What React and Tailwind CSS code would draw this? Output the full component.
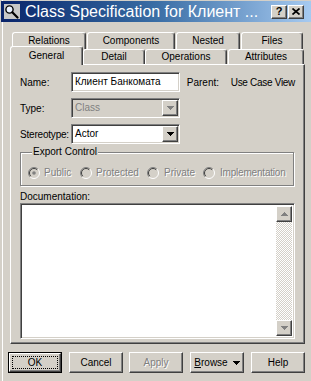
import React from "react";

const raised =
  "border border-t-white border-l-white border-r-[#404040] border-b-[#404040] shadow-[inset_-1px_-1px_0_#808080]";
const sunken =
  "border border-t-[#808080] border-l-[#808080] border-r-white border-b-white shadow-[inset_1px_1px_0_#404040,inset_-1px_-1px_0_#d4d0c8]";
const dis = "text-[#808080] [text-shadow:1px_1px_0_#ffffff]";

function Tri({ up = false, color = "#000" }) {
  const rows = [7, 5, 3, 1];
  const r = up ? [...rows].reverse() : rows;
  return (
    <svg width="7" height="4" viewBox="0 0 7 4" shapeRendering="crispEdges">
      {r.map((w, i) => (
        <rect key={i} x={(7 - w) / 2} y={i} width={w} height="1" fill={color} />
      ))}
    </svg>
  );
}

function Radio({ checked }) {
  return (
    <svg width="12" height="12" viewBox="0 0 12 12" className="shrink-0">
      <circle cx="6" cy="6" r="5" fill="#d4d0c8" />
      <path d="M2.1 9.9A5.5 5.5 0 0 1 9.9 2.1" stroke="#808080" strokeWidth="1" fill="none" />
      <path d="M9.9 2.1A5.5 5.5 0 0 1 2.1 9.9" stroke="#ffffff" strokeWidth="1" fill="none" />
      <path d="M2.8 9.2A4.5 4.5 0 0 1 9.2 2.8" stroke="#404040" strokeWidth="1" fill="none" />
      {checked && <circle cx="6" cy="6" r="1.8" fill="#808080" />}
    </svg>
  );
}

function Tab1({ label, className }) {
  return (
    <div
      className={`h-[17px] border-t border-l border-white border-r border-r-[#404040] rounded-t-[3px] shadow-[inset_-1px_0_0_#808080] flex justify-center pt-[2px] leading-[12px] ${className}`}
    >
      {label}
    </div>
  );
}

function Tab2({ label, className }) {
  return (
    <div
      className={`h-[15px] border-t border-l border-white border-r border-r-[#404040] rounded-t-[3px] shadow-[inset_-1px_0_0_#808080] flex justify-center pt-[1px] leading-[12px] ${className}`}
    >
      {label}
    </div>
  );
}

function Btn({ children, className = "" }) {
  return (
    <div className={`w-[54px] h-[21px] ${raised} flex items-center justify-center leading-[12px] ${className}`}>
      {children}
    </div>
  );
}

export default function App() {
  return (
    <div className="w-[311px] h-[381px] bg-[#d4d0c8] overflow-hidden font-['Liberation_Sans',Arial,sans-serif] text-[10px] text-black whitespace-nowrap shadow-[inset_2px_0_0_#d4d0c8,inset_3px_0_0_#ffffff]">
      {/* title bar */}
      <div className="mt-[1px] ml-[1px] h-[21px] flex items-center bg-linear-to-r from-[#0a246a] via-[#3a6ea5] to-[#a6caf0] pl-[3px] pr-[7px]">
        <svg width="16" height="15" viewBox="0 0 16 15" className="shrink-0">
          <rect x="0" y="0" width="16" height="15" fill="#c8c8c8" />
          <circle cx="5.5" cy="5.5" r="3.6" fill="#e8f0ff" stroke="#000" strokeWidth="1.4" />
          <path d="M8.3 8.3L13.5 13.5" stroke="#000" strokeWidth="2.2" strokeLinecap="round" />
          <path d="M4 4.2L5.4 3.4" stroke="#fff" strokeWidth="1" />
        </svg>
        <div className="ml-[5px] flex-1 text-white text-[16px] leading-[20px] overflow-hidden">
          Class Specification for Клиент ...
        </div>
        <div className={`w-[16px] h-[14px] bg-[#d4d0c8] ${raised} flex items-center justify-center font-bold text-[11px] leading-[11px]`}>
          ?
        </div>
        <div className={`ml-[1px] w-[16px] h-[14px] bg-[#d4d0c8] ${raised} flex items-center justify-center`}>
          <svg width="8" height="7" viewBox="0 0 8 7">
            <path d="M0.5 0.5L7.5 6.5M7.5 0.5L0.5 6.5" stroke="#000" strokeWidth="1.7" />
          </svg>
        </div>
      </div>

      {/* tabs row 1 */}
      <div className="mt-[10px] ml-[12px] flex gap-[1px]">
        <Tab1 label="Relations" className="w-[74px]" />
        <Tab1 label="Components" className="w-[88px]" />
        <Tab1 label="Nested" className="w-[64px]" />
        <Tab1 label="Files" className="w-[62px]" />
      </div>
      {/* tabs row 2 */}
      <div className="ml-[10px] h-[15px] flex items-end">
        <div className="relative z-10 -mb-[1px] w-[73px] h-[19px] bg-[#d4d0c8] border-t border-l border-white border-r border-r-[#404040] rounded-t-[3px] shadow-[inset_-1px_0_0_#808080] flex justify-center pt-[3px] leading-[12px]">
          General
        </div>
        <Tab2 label="Detail" className="w-[62px]" />
        <Tab2 label="Operations" className="w-[82px]" />
        <Tab2 label="Attributes" className="ml-[1px] w-[76px]" />
      </div>

      {/* panel */}
      <div className="ml-[10px] w-[295px] h-[280px] border border-t-white border-l-white border-r-[#404040] border-b-[#404040] shadow-[inset_-1px_-1px_0_#808080] flex flex-col px-[9px]">
        {/* Name */}
        <div className="mt-[7px] h-[20px] flex items-center">
          <div className="w-[51px]">Name:</div>
          <div className={`w-[109px] h-[20px] bg-white ${sunken} flex items-center pl-[3px] leading-[12px]`}>
            Клиент Банкомата
          </div>
          <div className="ml-[7px] w-[44px]">Parent:</div>
          <div className="tracking-[-0.3px]">Use Case View</div>
        </div>
        {/* Type */}
        <div className="mt-[6px] h-[20px] flex items-center">
          <div className="w-[51px]">Type:</div>
          <div className={`w-[109px] h-[20px] bg-[#d4d0c8] ${sunken} flex items-center pl-[3px] pr-[1px] leading-[12px]`}>
            <div className="flex-1 text-[#808080]">Class</div>
            <div className={`w-[16px] h-[16px] ${raised} flex items-center justify-center`}>
              <Tri color="#808080" />
            </div>
          </div>
        </div>
        {/* Stereotype */}
        <div className="mt-[6px] h-[20px] flex items-center">
          <div className="w-[51px] tracking-[-0.2px]">Stereotype:</div>
          <div className={`w-[109px] h-[20px] bg-white ${sunken} flex items-center pl-[3px] pr-[1px] leading-[12px]`}>
            <div className="flex-1">Actor</div>
            <div className={`w-[16px] h-[16px] bg-[#d4d0c8] ${raised} flex items-center justify-center`}>
              <Tri />
            </div>
          </div>
        </div>
        {/* Export Control */}
        <fieldset className="mt-[2px] w-[274px] h-[40px] border border-[#808080] shadow-[1px_1px_0_#ffffff,inset_1px_1px_0_#ffffff] pl-[7px]">
          <legend className="ml-[4px] px-[1px] leading-[12px] bg-[#d4d0c8]">Export Control</legend>
          <div className="mt-[9px] flex items-center leading-[12px]">
            <div className="w-[52px] flex items-center gap-[4px]">
              <Radio checked />
              <span className={dis}>Public</span>
            </div>
            <div className="w-[67px] flex items-center gap-[4px]">
              <Radio />
              <span className={dis}>Protected</span>
            </div>
            <div className="w-[56px] flex items-center gap-[5px]">
              <Radio />
              <span className={dis}>Private</span>
            </div>
            <div className="flex items-center gap-[5px]">
              <Radio />
              <span className={`${dis} tracking-[-0.2px]`}>Implementation</span>
            </div>
          </div>
        </fieldset>
        {/* Documentation */}
        <div className="mt-[4px] leading-[13px] h-[13px]">Documentation:</div>
        <div className={`w-[275px] h-[136px] bg-white ${sunken} flex justify-end p-[2px]`}>
          <div className="w-[16px] h-full flex flex-col bg-[repeating-conic-gradient(#d4d0c8_0%_25%,#ffffff_0%_50%)] bg-[length:2px_2px]">
            <div className={`w-[16px] h-[16px] bg-[#d4d0c8] ${raised} flex items-center justify-center`}>
              <Tri up color="#808080" />
            </div>
            <div className="flex-1" />
            <div className={`w-[16px] h-[16px] bg-[#d4d0c8] ${raised} flex items-center justify-center`}>
              <Tri color="#808080" />
            </div>
          </div>
        </div>
      </div>

      {/* buttons */}
      <div className="mt-[8px] flex">
        <div className="ml-[8px] w-[54px] h-[21px] border border-black">
          <div className="w-full h-full border border-t-white border-l-white border-r-[#404040] border-b-[#404040] shadow-[inset_-1px_-1px_0_#808080] p-[2px]">
            <div className="w-full h-full border border-dotted border-black flex items-center justify-center leading-[12px]">
              OK
            </div>
          </div>
        </div>
        <Btn className="ml-[7px]">Cancel</Btn>
        <Btn className="ml-[6px]">
          <span className={dis}>Apply</span>
        </Btn>
        <Btn className="ml-[7px]">
          <span>
            <span className="underline">B</span>rowse
          </span>
          <span className="ml-[5px] flex">
            <Tri />
          </span>
        </Btn>
        <Btn className="ml-[7px]">Help</Btn>
      </div>
    </div>
  );
}
